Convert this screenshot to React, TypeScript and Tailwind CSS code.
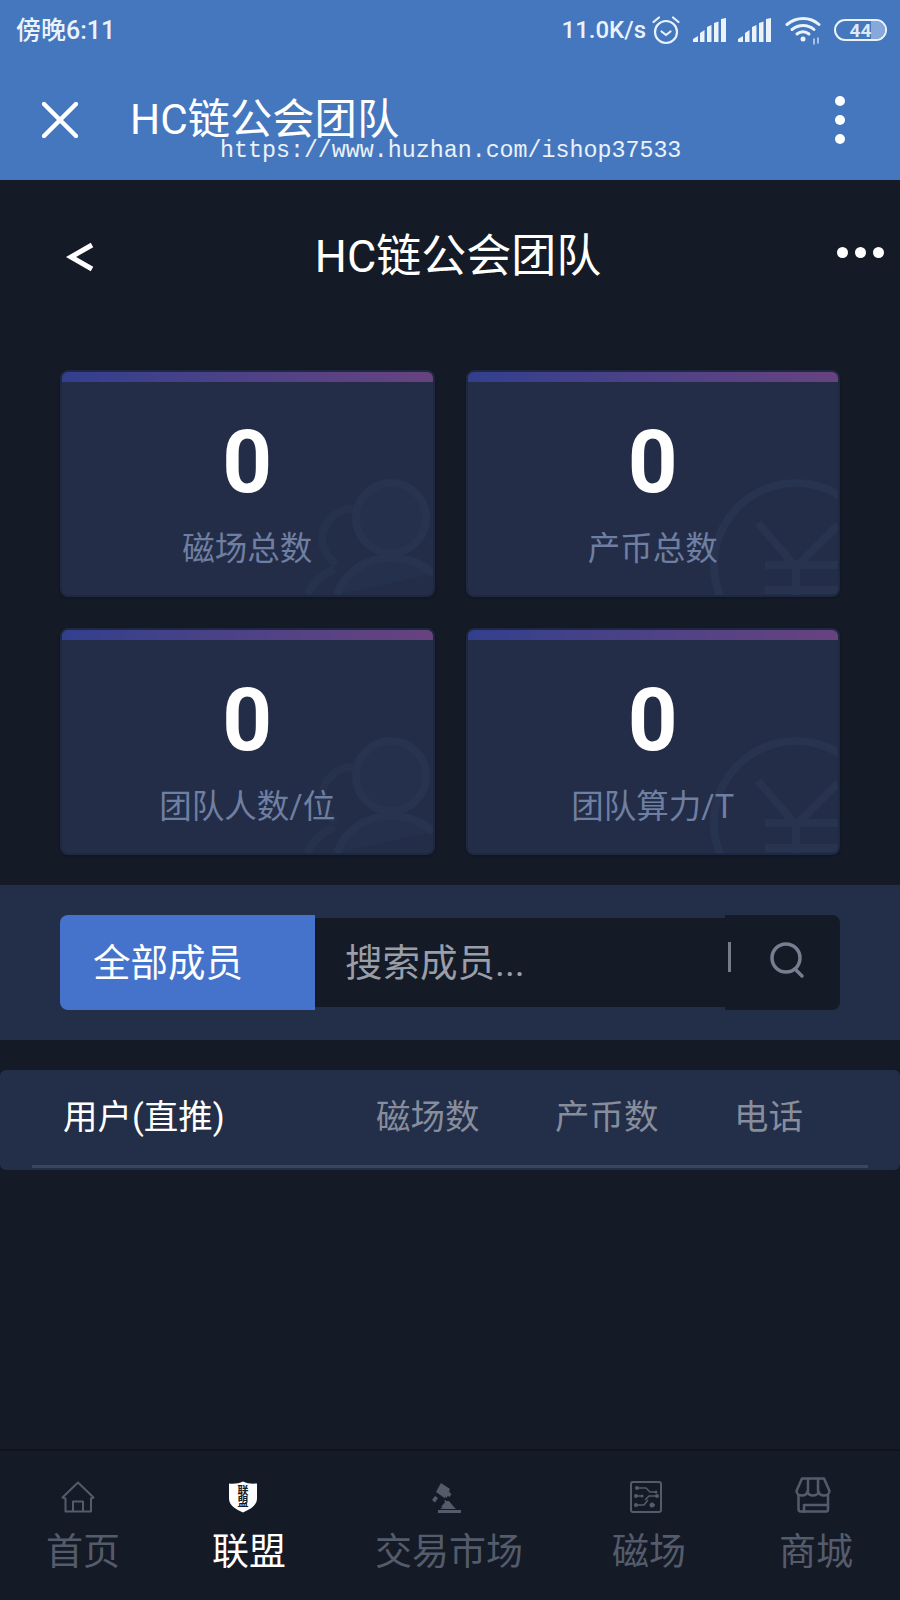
import React from "react";

const cjk = "font-['Roboto','Noto_Sans_CJK_SC',sans-serif]";

function Alarm() {
  return (
    <svg width="30" height="30" viewBox="0 0 30 30" fill="none" stroke="#eaf2fb" strokeWidth="2.200" strokeLinecap="round" strokeLinejoin="round">
      <circle cx="15" cy="17" r="11" />
      <path d="M10.500 16.500l4.500 3.500 4.500-3.500" />
      <path d="M2.500 7L8 2.500M27.500 7L22 2.500" />
    </svg>
  );
}

function Signal() {
  return (
    <svg width="34" height="24" viewBox="0 0 34 24" fill="#eaf2fb">
      <path d="M0 24v-3l5-3v6zM7 24v-9l4.500-3v12zM14 24v-15l4.500-2v17zM21 24v-19l4.500-1.500v20.500zM28 24v-23l5-1v24z" />
    </svg>
  );
}

function Wifi() {
  return (
    <svg width="36" height="30" viewBox="0 0 36 30" fill="none" stroke="#eaf2fb" strokeWidth="3" strokeLinecap="round">
      <path d="M2 9.500c9.500-8 23-8 32 0" />
      <path d="M7 14.500c6.500-5.500 16-5.500 22 0" />
      <path d="M12 19c3.500-3 8.500-3 12 0" />
      <circle cx="18" cy="24" r="2.500" fill="#eaf2fb" stroke="none" />
      <path d="M29 24v5M33 23v5" strokeWidth="1.500" opacity="0.8" />
    </svg>
  );
}

function Battery() {
  return (
    <div className="relative flex h-[22px] w-[53px] items-center justify-center overflow-hidden rounded-[11px] border-2 border-[#eaf2fb]">
      <div className="absolute inset-y-0 right-0 w-[14px] bg-[#86a8da]" />
      <span className="relative font-['Roboto',sans-serif] text-[19px] leading-none font-bold text-[#dfe9f6]">44</span>
    </div>
  );
}

function PeopleMark() {
  return (
    <svg className="absolute right-0 bottom-0" width="128" height="118" viewBox="0 0 128 118" fill="none" stroke="#28344f" strokeWidth="8">
      <circle cx="86" cy="41" r="35" fill="#24304c" />
      <path d="M52 32C32 30 16 46 17 64c1 10 7 18 14 23" strokeOpacity="0.6" />
      <path d="M32 118c8-24 30-37 54-37 17 0 33 6 42 16" fill="#24304c" />
      <path d="M2 118c6-12 16-22 28-26" strokeOpacity="0.6" />
    </svg>
  );
}

function YuanMark() {
  return (
    <svg className="absolute right-0 bottom-0" width="128" height="118" viewBox="0 0 128 118" fill="none" stroke="#28344f" strokeWidth="8">
      <circle cx="86" cy="88" r="82" />
      <path d="M48 46l38 44 42-42" />
      <path d="M55 88h73M55 113h73M86 90v28" />
    </svg>
  );
}

function Card({ label, kind }: { label: string; kind: "people" | "yuan" }) {
  return (
    <div className="relative h-[227px] overflow-hidden rounded-lg border-2 border-[#1e2840] bg-[#232d48] shadow-sm">
      <div className="relative h-[10px] bg-gradient-to-r from-[#323f8e] to-[#67427f]" />
      {kind === "people" ? <PeopleMark /> : <YuanMark />}
      <div className="relative flex flex-col items-center">
        <span className="mt-[39px] h-[82px] font-['Roboto',sans-serif] text-[87px] leading-[82px] font-bold text-white">0</span>
        <span className="mt-[24px] text-[32.500px] leading-[44px] text-[#6f7fa1]">{label}</span>
      </div>
    </div>
  );
}

function HomeIcon() {
  return (
    <svg width="34" height="32" viewBox="0 0 34 32" fill="none" stroke="#545c6b" strokeWidth="2" strokeLinejoin="round">
      <path d="M1.500 16.500L17 1.500l15.500 15-2.500 1v13H4.500v-13z" />
      <path d="M12 30.500V20.500h10v10" />
    </svg>
  );
}

function ShieldIcon() {
  return (
    <div className="relative flex h-[32px] w-[30px] items-center justify-center">
      <svg className="absolute inset-0" width="30" height="32" viewBox="0 0 30 32" fill="#ffffff">
        <path d="M1 2.500C6 3 11 2.500 15 .5c4 2 9 2.500 14 2v15c0 7-7 11-14 14C8 28.500 1 24.500 1 17.500z" />
      </svg>
      <span className="relative w-[12px] text-center text-[11px] leading-[11px] font-bold text-[#141a26]">联盟</span>
    </div>
  );
}

function GavelIcon() {
  return (
    <svg width="32" height="32" viewBox="0 0 32 32" fill="#545c6b">
      <path d="M10 2l9 6-1.500 3 3 2-2 3-3-2-2 3-8.500-6zM1 19l3-4 3 2-3 4.500z" />
      <path d="M14 16l4-6 1 1-3.500 6zM14 19l3 2-1 1-3-2zM12 26h11l2 2H9zM7 29h23v3H7z" />
      <path d="M10 26l5-6h3l5 6z" />
    </svg>
  );
}

function CircuitIcon() {
  return (
    <svg width="32" height="32" viewBox="0 0 32 32" fill="none" stroke="#545c6b" strokeWidth="1.500">
      <rect x="1" y="1" width="30" height="30" rx="2" strokeWidth="2" />
      <path d="M7 7h9l4 4h6M5 15h6M15 19l4-4h8M6 24h8l4-5M22 24h3" />
      <g fill="#545c6b" stroke="none">
        <circle cx="7" cy="7" r="2" />
        <circle cx="26" cy="11" r="1.500" />
        <circle cx="6" cy="15" r="2" />
        <circle cx="12" cy="15" r="1.500" />
        <circle cx="27" cy="15" r="2" />
        <circle cx="6" cy="24" r="2" />
        <circle cx="22" cy="24" r="2.500" />
      </g>
    </svg>
  );
}

function ShopIcon() {
  return (
    <svg width="36" height="36" viewBox="0 0 36 36" fill="none" stroke="#545c6b" strokeWidth="2.500" strokeLinejoin="round" strokeLinecap="round">
      <path d="M7 1.500h22l5.500 12.500c0 3-3 4.500-5.500 4.500-2.500 0-5-1.500-5.500-4 0 2.500-3 4-5.500 4s-5-1.500-5.500-4c-.5 2.500-3 4-5.500 4s-5.500-1.500-5.500-4.500z" />
      <path d="M13 2v12M23 2v12" />
      <path d="M3.500 18v14c0 1.500 1 2.500 2 2.500h26c1 0 1.500-1 1.500-2.500V18" />
      <path d="M9 35v-7h24" />
    </svg>
  );
}

function Tab({ label, active, width, iconPad, children }: { label: string; active?: boolean; width: string; iconPad: string; children: React.ReactNode }) {
  return (
    <div className={`flex flex-col items-center ${width}`}>
      <div className={`flex h-[36px] items-end ${iconPad}`}>{children}</div>
      <span className={`mt-[15px] text-[37px] leading-[50px] ${active ? "text-white" : "text-[#545c6b]"}`}>{label}</span>
    </div>
  );
}

export default function App() {
  return (
    <div className={`relative flex h-[1600px] w-[900px] flex-col overflow-hidden bg-[#141a26] ${cjk}`}>
      <header className="relative h-[180px] shrink-0 bg-[#4477bd]">
        <div className="flex h-[60px] items-center justify-between pr-[13px] pl-[16px] text-[#eaf2fb]">
          <span className="text-[25px] leading-none font-medium">傍晚6:11</span>
          <div className="flex items-center">
            <span className="text-[24px] leading-none font-medium">11.0K/s</span>
            <span className="ml-[5px]"><Alarm /></span>
            <span className="ml-[12px]"><Signal /></span>
            <span className="ml-[11px]"><Signal /></span>
            <span className="ml-[13px]"><Wifi /></span>
            <span className="ml-[13px]"><Battery /></span>
          </div>
        </div>
        <div className="mt-[30px] flex h-[60px] items-center pl-[42px] text-white">
          <svg width="36" height="36" viewBox="0 0 36 36" stroke="#ffffff" strokeWidth="4.500" strokeLinecap="round">
            <path d="M2 2l32 32M34 2L2 34" />
          </svg>
          <span className="ml-[52px] text-[42.300px] leading-none">HC链公会团队</span>
          <div className="mr-[55px] ml-auto flex flex-col gap-[9px]">
            <span className="block h-[10px] w-[10px] rounded-full bg-white" />
            <span className="block h-[10px] w-[10px] rounded-full bg-white" />
            <span className="block h-[10px] w-[10px] rounded-full bg-white" />
          </div>
        </div>
        <span className="absolute top-[137px] left-[220px] font-['Liberation_Mono',monospace] text-[23.300px] leading-[28px] whitespace-nowrap text-white/90">https://www.huzhan.com/ishop37533</span>
      </header>

      <div className="relative flex h-[150px] shrink-0 items-center justify-center pl-[16px] text-white">
        <svg className="absolute top-[62px] left-[66px]" width="28" height="30" viewBox="0 0 28 30" fill="none" stroke="#ffffff" strokeWidth="5">
          <path d="M26 3L5 15l21 12" />
        </svg>
        <span className="mt-[2px] text-[45px] leading-none">HC链公会团队</span>
        <div className="absolute top-[67px] right-[16px] flex gap-[7px]">
          <span className="block h-[11px] w-[11px] rounded-full bg-white" />
          <span className="block h-[11px] w-[11px] rounded-full bg-white" />
          <span className="block h-[11px] w-[11px] rounded-full bg-white" />
        </div>
      </div>

      <div className="mt-[40px] grid grid-cols-2 gap-x-[31px] gap-y-[31px] px-[60px]">
        <Card label="磁场总数" kind="people" />
        <Card label="产币总数" kind="yuan" />
        <Card label="团队人数/位" kind="people" />
        <Card label="团队算力/T" kind="yuan" />
      </div>

      <div className="mt-[30px] h-[155px] shrink-0 bg-[#232e48] px-[60px] pt-[30px]">
        <div className="flex h-[95px] items-center">
          <div className="flex h-[95px] w-[255px] items-center rounded-l-lg bg-[#4573cb] pt-[2px] pl-[33px] text-[37.500px] text-white">全部成员</div>
          <div className="flex h-[89px] w-[410px] items-center bg-[#141a26] pt-[2px] pl-[30px] text-[37.500px] text-[#9a9ea8]">搜索成员...</div>
          <div className="relative flex h-[95px] w-[115px] items-center justify-center rounded-r-lg bg-[#141a26] pb-[6px] pl-[8px]">
            <span className="absolute top-[27px] left-[3px] h-[30px] w-[3px] bg-[#767c8a]" />
            <svg width="36" height="38" viewBox="0 0 36 38" fill="none" stroke="#767f90" strokeWidth="3.500" strokeLinecap="round">
              <circle cx="17" cy="17" r="14" />
              <path d="M26 28l7 7" />
            </svg>
          </div>
        </div>
      </div>

      <div className="mt-[30px] h-[100px] shrink-0 rounded-md bg-[#232e48] px-[32px]">
        <div className="flex h-[98px] items-center border-b-[3px] border-[#3a4560] text-[34.500px] text-[#878d9c]">
          <span className="ml-[31px] w-[313px] text-white">用户(直推)</span>
          <span className="w-[179px]">磁场数</span>
          <span className="w-[179px]">产币数</span>
          <span>电话</span>
        </div>
      </div>

      <nav className="mt-auto flex h-[151px] shrink-0 border-t-2 border-[#0f131d] bg-[#141a26] pt-[26px]">
        <Tab label="首页" width="w-[166px]" iconPad="pr-[10px]"><HomeIcon /></Tab>
        <Tab label="联盟" active width="w-[166px]" iconPad="pr-[12px]"><ShieldIcon /></Tab>
        <Tab label="交易市场" width="w-[234px]" iconPad="pr-[4px]"><GavelIcon /></Tab>
        <Tab label="磁场" width="w-[166px]" iconPad="pr-[6px]"><CircuitIcon /></Tab>
        <Tab label="商城" width="w-[168px]" iconPad="pr-[6px]"><ShopIcon /></Tab>
      </nav>
    </div>
  );
}
